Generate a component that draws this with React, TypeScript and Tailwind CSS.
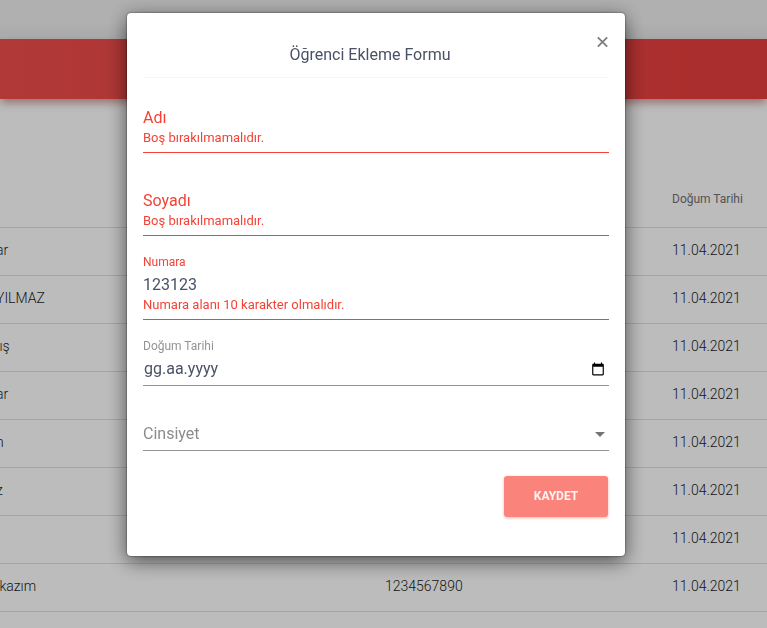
import { useState, type ReactNode } from "react";

const rows = [
  { name: "ar", number: "" },
  { name: "YILMAZ", number: "" },
  { name: "\u00a0ış", number: "" },
  { name: "ar", number: "" },
  { name: "n", number: "" },
  { name: "z", number: "" },
  { name: "", number: "" },
  { name: "\u00a0kazım", number: "1234567890" },
];

function StudentTable() {
  return (
    <table className="-ml-1 w-[calc(100%+4px)] table-fixed border-collapse text-left text-sm font-light text-[#1c1c1c]">
      <colgroup>
        <col />
        <col className="w-[287px]" />
        <col className="w-[95px]" />
      </colgroup>
      <thead>
        <tr className="h-14 border-b border-[#dcdcdc] text-xs text-[#707070]">
          <th className="p-0" />
          <th className="p-0" />
          <th className="whitespace-nowrap p-0 font-normal">Doğum Tarihi</th>
        </tr>
      </thead>
      <tbody>
        {rows.map((row, i) => (
          <tr key={i} className="h-12 border-b border-[#dcdcdc]">
            <td className="p-0 pb-0.5">{row.name}</td>
            <td className="p-0 pb-0.5">{row.number}</td>
            <td className="p-0 pb-0.5">11.04.2021</td>
          </tr>
        ))}
      </tbody>
    </table>
  );
}

type FieldProps = {
  id: string;
  label?: string;
  invalid?: boolean;
  error?: string;
  children: ReactNode;
};

function Field({ id, label, invalid, error, children }: FieldProps) {
  return (
    <div className={`border-b ${invalid ? "border-[#f44336] pb-1.5" : "border-[#949494] pb-1"}`}>
      <div className={`text-xs leading-5 ${label ? "h-[21px]" : "h-5"}`}>
        {label && (
          <label htmlFor={id} className={invalid ? "text-[#f44336]" : "text-[#949494]"}>
            {label}
          </label>
        )}
      </div>
      <div className="flex h-6 items-center text-base text-[#495057]">{children}</div>
      {error && <p className="h-4 text-[13px] leading-4 text-[#f44336]">{error}</p>}
    </div>
  );
}

const inputClass = "h-6 w-full min-w-0 bg-transparent p-0 text-base text-[#495165] outline-none";

export default function App() {
  const [number, setNumber] = useState("123123");
  return (
    <div className="relative min-h-screen overflow-hidden bg-[#fbfbfb] font-[Roboto,sans-serif]">
      <div className="h-[39px] bg-linear-to-b from-[#ebebeb] from-60% to-[#e2e2e2]" />
      <div className="h-[60px] bg-linear-to-r from-[#ec4c4b] to-[#e33d3c] shadow-[0_5px_8px_-1px_rgba(150,40,40,0.45)]" />
      <main className="pt-[72px]">
        <StudentTable />
      </main>

      <div className="fixed inset-0 flex items-start justify-center overflow-hidden bg-black/25 pt-[13px] pr-[15px]">
        <section
          role="dialog"
          aria-labelledby="dialog-title"
          className="w-full max-w-[498px] rounded-sm bg-white px-4 pb-[39px] shadow-[0_0_2px_rgba(0,0,0,0.7),0_5px_20px_rgba(0,0,0,0.6)]"
        >
          <header className="grid h-[65px] border-b border-[#f5f5f5]">
            <h2
              id="dialog-title"
              className="col-start-1 row-start-1 self-end justify-self-center pb-2.5 pr-3 text-base text-[#495165]"
            >
              Öğrenci Ekleme Formu
            </h2>
            <button
              type="button"
              aria-label="Kapat"
              className="col-start-1 row-start-1 mt-[22px] self-start justify-self-end"
            >
              <svg viewBox="0 0 14 14" className="size-3.5" stroke="#7d7d7d" strokeWidth="1.8">
                <path d="M2.8 2.3 12.2 11.7M12.2 2.3 2.8 11.7" />
              </svg>
            </button>
          </header>

          <form className="flex flex-col gap-4 pt-2" onSubmit={(e) => e.preventDefault()}>
            <Field id="first-name" invalid error="Boş bırakılmamalıdır.">
              <input id="first-name" aria-label="Adı" placeholder="Adı" className={`${inputClass} placeholder:text-[#f44336]`} />
            </Field>
            <Field id="last-name" invalid error="Boş bırakılmamalıdır.">
              <input id="last-name" aria-label="Soyadı" placeholder="Soyadı" className={`${inputClass} placeholder:text-[#f44336]`} />
            </Field>
            <Field id="number" label="Numara" invalid error="Numara alanı 10 karakter olmalıdır.">
              <input id="number" value={number} onChange={(e) => setNumber(e.target.value)} className={inputClass} />
            </Field>
            <Field id="birth-date" label="Doğum Tarihi">
              <input id="birth-date" placeholder="gg.aa.yyyy" className={`${inputClass} pl-px placeholder:text-[#495165]`} />
              <button type="button" aria-label="Takvimi aç" className="mr-1 shrink-0">
                <svg viewBox="0 0 24 24" className="size-3.5" fill="#000">
                  <path d="M20 3h-1V1h-2v2H7V1H5v2H4c-1.1 0-2 .9-2 2v16c0 1.1.9 2 2 2h16c1.1 0 2-.9 2-2V5c0-1.1-.9-2-2-2zm0 18H4V8h16v13z" />
                </svg>
              </button>
            </Field>
            <Field id="gender">
              <select id="gender" aria-label="Cinsiyet" defaultValue="" className="h-6 w-full appearance-none bg-transparent p-0 text-base text-[#8c8c8c] outline-none">
                <option value="">Cinsiyet</option>
                <option value="K">Kadın</option>
                <option value="E">Erkek</option>
              </select>
              <svg viewBox="0 0 10 5" className="pointer-events-none mr-1 h-[5px] w-2.5 shrink-0" fill="#757575">
                <path d="M0 0h10L5 5z" />
              </svg>
            </Field>
            <div className="flex justify-end pt-[9px] pr-px">
              <button
                type="submit"
                className="h-[41px] w-[104px] rounded-[3px] bg-[#fa847c] pb-0.5 text-xs font-bold text-white/90 shadow-[0_1px_3px_rgba(244,67,54,0.4)]"
              >
                KAYDET
              </button>
            </div>
          </form>
        </section>
      </div>
    </div>
  );
}
